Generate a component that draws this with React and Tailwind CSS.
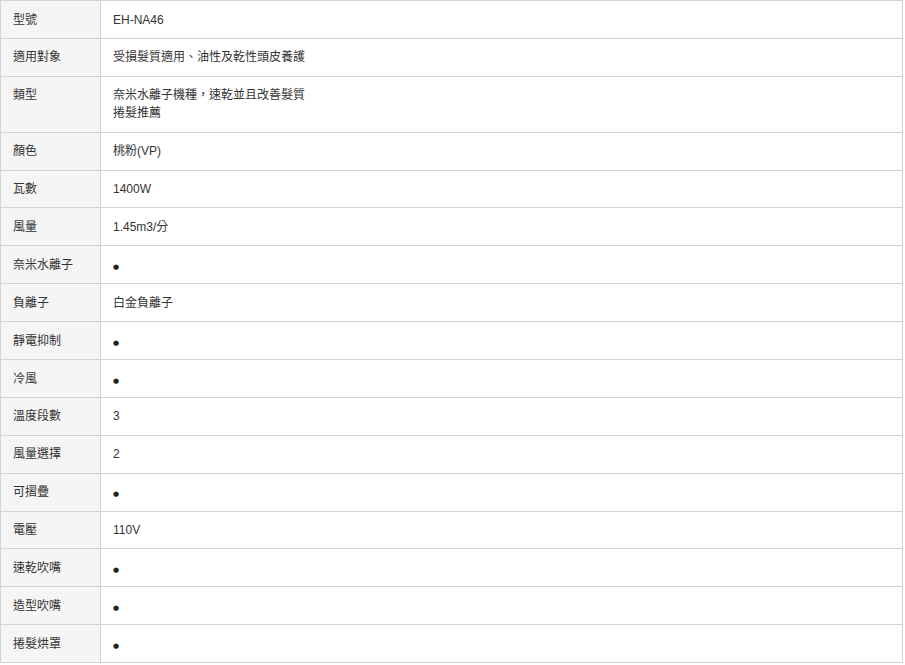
import React from "react";

const rows = [
  ["型號", ["EH-NA46"]],
  ["適用對象", ["受損髮質適用、油性及乾性頭皮養護"]],
  ["類型", ["奈米水離子機種，速乾並且改善髮質", "捲髮推薦"]],
  ["顏色", ["桃粉(VP)"]],
  ["瓦數", ["1400W"]],
  ["風量", ["1.45m3/分"]],
  ["奈米水離子", ["●"]],
  ["負離子", ["白金負離子"]],
  ["靜電抑制", ["●"]],
  ["冷風", ["●"]],
  ["溫度段數", ["3"]],
  ["風量選擇", ["2"]],
  ["可摺疊", ["●"]],
  ["電壓", ["110V"]],
  ["速乾吹嘴", ["●"]],
  ["造型吹嘴", ["●"]],
  ["捲髮烘罩", ["●"]],
];

export default function App() {
  return (
    <div className="w-[905px] h-[665px] bg-white overflow-hidden">
      <table
        className="w-[903px] border-collapse text-[12px] leading-[18px] text-[#333]"
        style={{ fontFamily: '"Liberation Sans", "Noto Sans CJK TC", sans-serif' }}
      >
        <tbody>
          {rows.map(([label, vals]) => (
            <tr key={label}>
              <td className="w-[100px] border border-[#d2d2d2] bg-[#f5f5f5] px-[12px] pt-[9.5px] pb-[9.4px] align-top">
                {label}
              </td>
              <td className="border border-[#d2d2d2] bg-white px-[12px] pt-[9.5px] pb-[9.4px] align-top">
                {vals.map((v, i) =>
                  v === "●" ? (
                    <div
                      key={i}
                      className="h-[18px] pt-[4px] flex items-center text-[7px] leading-[10px] text-[#222]"
                      style={{ fontFamily: '"DejaVu Sans", sans-serif' }}
                    >
                      ●
                    </div>
                  ) : (
                    <div key={i}>{v}</div>
                  )
                )}
              </td>
            </tr>
          ))}
        </tbody>
      </table>
    </div>
  );
}
